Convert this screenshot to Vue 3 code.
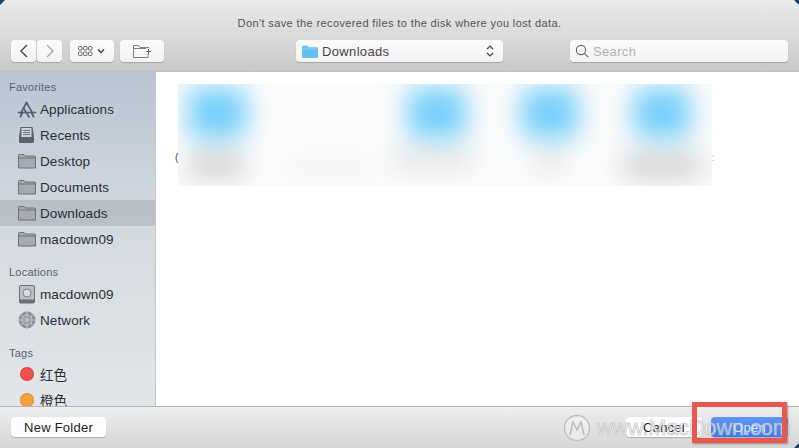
<script setup>
const sections = [
  { title: 'Favorites', cls: 'first', items: [
    { name: 'Applications', icon: 'apps' },
    { name: 'Recents', icon: 'recents' },
    { name: 'Desktop', icon: 'folder' },
    { name: 'Documents', icon: 'folder' },
    { name: 'Downloads', icon: 'folder', active: true },
    { name: 'macdown09', icon: 'folder' }
  ]},
  { title: 'Locations', cls: 'loc', items: [
    { name: 'macdown09', icon: 'disk' },
    { name: 'Network', icon: 'globe' }
  ]},
  { title: 'Tags', cls: 'tags', items: [
    { name: '红色', icon: 'tag', color: '#f4504c' },
    { name: '橙色', icon: 'tag', color: '#f7a03c' }
  ]}
]
const blobs = [
  { x: 188, y: 88, w: 58, h: 50, c: '#74cffa' },
  { x: 408, y: 88, w: 58, h: 50, c: '#74cffa' },
  { x: 522, y: 88, w: 56, h: 50, c: '#74cffa' },
  { x: 634, y: 88, w: 56, h: 50, c: '#74cffa' },
  { x: 188, y: 152, w: 56, h: 26, c: '#d2d2d2' },
  { x: 285, y: 160, w: 90, h: 14, c: '#f0f0f0' },
  { x: 392, y: 152, w: 82, h: 14, c: '#dadada' },
  { x: 532, y: 152, w: 34, h: 16, c: '#dedede' },
  { x: 622, y: 154, w: 80, h: 24, c: '#d0d0d0' }
]
const blobStyle = b => ({
  left: b.x - 178 + 'px',
  top: b.y - 84 + 'px',
  width: b.w + 'px',
  height: b.h + 'px',
  background: b.c
})
</script>

<template>
  <div class="dialog">
    <header class="toolbar">
      <p class="message">Don't save the recovered files to the disk where you lost data.</p>
      <div class="controls">
        <div class="nav">
          <button class="btn nav-btn">
            <svg width="10" height="14" viewBox="0 0 10 14"><path d="M8 1 2 7l6 6" fill="none" stroke="#444" stroke-width="1.4"/></svg>
          </button>
          <button class="btn nav-btn">
            <svg width="10" height="14" viewBox="0 0 10 14"><path d="m2 1 6 6-6 6" fill="none" stroke="#a8a8a8" stroke-width="1.4"/></svg>
          </button>
        </div>
        <button class="btn view-btn">
          <svg width="29" height="12" viewBox="0 0 29 12">
            <g fill="none" stroke="#666" stroke-width="1">
              <rect x=".5" y="1.500" width="3.500" height="3.500" rx=".8"/><rect x="5.500" y="1.500" width="3.500" height="3.500" rx=".8"/><rect x="10.500" y="1.500" width="3.500" height="3.500" rx=".8"/>
              <rect x=".5" y="7" width="3.500" height="3.500" rx=".8"/><rect x="5.500" y="7" width="3.500" height="3.500" rx=".8"/><rect x="10.500" y="7" width="3.500" height="3.500" rx=".8"/>
            </g>
            <path d="m20 4.500 3 3 3-3" fill="none" stroke="#444" stroke-width="1.500"/>
          </svg>
        </button>
        <button class="btn new-btn">
          <svg width="18" height="13" viewBox="0 0 18 13" fill="none" stroke="#808080" stroke-width="1">
            <path d="M.5 12.500V.5h5l1.500 2h9M.5 12.500H15V9M.5 3.500H13"/>
            <path d="M15.500 4v5M13 6.500h5" stroke="#666"/>
          </svg>
        </button>
        <button class="btn popup">
          <svg class="popup-folder" width="16" height="13" viewBox="0 0 16 13">
            <path d="M0 2a1.200 1.200 0 0 1 1.200-1.200h4l1.300 1.400h8.200A1.300 1.300 0 0 1 16 3.500v8.200a1.200 1.200 0 0 1-1.200 1.200H1.200A1.200 1.200 0 0 1 0 11.700z" fill="#64bdf3"/>
            <rect y="3.400" width="16" height="1" fill="#8fd2f9"/>
          </svg>
          <span class="popup-label">Downloads</span>
          <svg class="updown" width="8" height="14" viewBox="0 0 8 14" fill="none" stroke="#444" stroke-width="1.200"><path d="m1 5 3-3 3 3M1 9l3 3 3-3"/></svg>
        </button>
        <div class="btn search">
          <svg width="14" height="14" viewBox="0 0 14 14" fill="none" stroke="#666" stroke-width="1.100"><circle cx="6" cy="6" r="4.600"/><path d="m9.400 9.400 3.800 3.800"/></svg>
          <span>Search</span>
        </div>
      </div>
    </header>

    <div class="middle">
      <aside class="sidebar">
        <section v-for="s in sections" :key="s.title" class="section" :class="s.cls">
          <h4>{{ s.title }}</h4>
          <div v-for="it in s.items" :key="s.title + it.name" class="row" :class="{ active: it.active }">
            <span class="ico">
              <svg v-if="it.icon === 'apps'" width="20" height="17" viewBox="0 0 20 17" fill="none" stroke="#59616c" stroke-linecap="round">
                <path d="M9.500 1.500 4 12M9.500 1.500 15.500 12" stroke-width="1.700"/>
                <path d="M1.500 11.500h17M6.500 7l5.500 9" stroke-width="1.700"/>
                <path d="M3.500 15.500 5 12.500M16.500 15.500 15 12.500" stroke-width="2"/>
              </svg>
              <svg v-else-if="it.icon === 'recents'" width="17" height="18" viewBox="0 0 17 18">
                <path d="M2.500 1h12l1.500 9.500v5a1.500 1.500 0 0 1-1.500 1.500h-12A1.500 1.500 0 0 1 1 15.500v-5z" fill="#5b636e"/>
                <rect x="3.500" y="2" width="10" height="9" fill="#cfd3d9"/>
                <path d="M5 4.500h7M5 6.500h7M5 8.500h7" stroke="#6f7680"/>
              </svg>
              <svg v-else-if="it.icon === 'folder'" width="18" height="15" viewBox="0 0 18 15">
                <path d="M.5 14V1.500a1 1 0 0 1 1-1h4.500l1.200 1.500h9.300a1 1 0 0 1 1 1V14z" fill="#a7abb0" stroke="#6e7277"/>
                <path d="M.5 4h17" stroke="#6e7277"/>
              </svg>
              <svg v-else-if="it.icon === 'disk'" width="16" height="19" viewBox="0 0 16 19">
                <rect x=".5" y=".5" width="15" height="17.500" rx="1.500" fill="#bcc0c4" stroke="#6e7277"/>
                <circle cx="8" cy="8" r="4" fill="#d8dadd" stroke="#80858b"/>
                <rect x=".5" y="14.500" width="15" height="3.500" fill="#6c7077"/>
              </svg>
              <svg v-else-if="it.icon === 'globe'" width="18" height="18" viewBox="0 0 18 18" fill="none">
                <circle cx="9" cy="9" r="8.500" fill="#8b9096"/>
                <g stroke="#d0d3d6" stroke-width=".8"><circle cx="9" cy="9" r="5"/><path d="M1 9h16M9 1v16M3 4l12 10M15 4 3 14"/></g>
              </svg>
              <span v-else class="dot" :style="{ background: it.color }"></span>
            </span>
            <span class="name">{{ it.name }}</span>
          </div>
        </section>
      </aside>
      <main class="files">
        <div class="redacted">
          <div class="blurs">
            <span v-for="(b, i) in blobs" :key="i" class="blob" :style="blobStyle(b)"></span>
          </div>
        </div>
        <span class="stray left">(</span>
        <span class="stray right">:</span>
      </main>
    </div>

    <footer class="footer">
      <button class="btn foot-btn new-folder">New Folder</button>
      <button class="btn foot-btn cancel">Cancel</button>
      <button class="btn foot-btn open">Open</button>
    </footer>

    <i class="corner tl"></i><i class="corner tr"></i><i class="corner br"></i>

    <div class="mark">
      <svg width="28" height="28" viewBox="0 0 28 28" fill="none" stroke="#bdbdbd" stroke-width="1.300">
        <circle cx="14" cy="14" r="12.500" fill="#ffffff66"/>
        <path d="M7 21 10 8l4 8 4-8 3 13" stroke-width="1.600"/>
      </svg>
      <span>www.MacDown.com</span>
    </div>
    <div class="callout"></div>
  </div>
</template>

<style scoped>
.dialog {
  position: relative;
  width: 799px;
  height: 448px;
  display: grid;
  grid-template-rows: 72px 1fr 42px;
  overflow: hidden;
  background: #fff;
  font-family: "Liberation Sans", Arial, sans-serif;
  color: #2b2f35;
}
.toolbar {
  background: linear-gradient(#ebebeb, #dddddd 40%, #c9c9c9);
  border-bottom: 1px solid #c2c2c2;
  box-sizing: border-box;
}
.message {
  margin: 0;
  padding-top: 16px;
  line-height: 14px;
  height: 14px;
  text-align: center;
  font-size: 11px;
  letter-spacing: .39px;
  color: #555;
}
.controls {
  display: flex;
  align-items: center;
  margin-top: 10px;
  padding-left: 11px;
}
.btn {
  box-sizing: border-box;
  height: 22px;
  padding: 0;
  border: 0;
  border-radius: 4px;
  background: linear-gradient(#fbfbfb, #f3f3f3);
  box-shadow: 0 1px 1px rgba(0, 0, 0, .2);
  display: flex;
  align-items: center;
  justify-content: center;
  font: inherit;
}
.nav { display: flex; gap: 1px; }
.nav-btn { width: 25px; }
.view-btn { width: 44px; margin-left: 8px; }
.new-btn { width: 44px; margin-left: 6px; }
.popup {
  width: 207px;
  margin-left: 132px;
  justify-content: flex-start;
  padding: 0 9px 0 6px;
}
.popup-label {
  margin-left: 4px;
  font-size: 13px;
  letter-spacing: .35px;
  color: #444;
}
.updown { margin-left: auto; }
.search {
  width: 218px;
  margin-left: 67px;
  justify-content: flex-start;
  padding-left: 5px;
  gap: 4px;
  font-size: 13px;
  letter-spacing: .35px;
  color: #b2b2b2;
}
.middle {
  display: grid;
  grid-template-columns: 156px 1fr;
  min-height: 0;
}
.sidebar {
  overflow: hidden;
  background: linear-gradient(#b9c5d3, #d3d9df 45%, #e3e6e9);
  border-right: 1px solid #c4c7ca;
  box-sizing: border-box;
}
.section.first { margin-top: 8px; }
.section.loc { margin-top: 13px; }
.section.tags { margin-top: 13px; }
h4 {
  margin: 0 0 2px;
  padding-left: 9px;
  height: 14px;
  line-height: 14px;
  font-size: 11px;
  font-weight: 400;
  letter-spacing: .25px;
  color: #59616c;
}
.tags h4 { margin-bottom: 1px; }
.row {
  display: flex;
  align-items: center;
  height: 26px;
}
.row.active { background: rgba(110, 120, 130, .25); }
.ico {
  width: 40px;
  display: flex;
  justify-content: center;
  padding-left: 13px;
  box-sizing: border-box;
}
.dot {
  width: 12px;
  height: 12px;
  border-radius: 50%;
  border: 1px solid rgba(0, 0, 0, .12);
}
.name {
  font-family: "Liberation Sans", "Noto Sans CJK SC", sans-serif;
  font-size: 13.500px;
  letter-spacing: .1px;
}
.files {
  position: relative;
  background: #fff;
  overflow: hidden;
}
.redacted {
  position: absolute;
  left: 22px;
  top: 12px;
  width: 534px;
  height: 102px;
  background: #fbfbfb;
  overflow: hidden;
}
.blurs { position: absolute; inset: 0; filter: blur(13px); }
.blob { position: absolute; border-radius: 8px; }
.stray {
  position: absolute;
  top: 80px;
  font-size: 10px;
  color: #444;
}
.stray.left { left: 19px; }
.stray.right { left: 556px; color: #aaa; }
.footer {
  position: relative;
  background: linear-gradient(#eeeeee, #d6d6d6);
  border-top: 1px solid #b5b5b5;
  box-sizing: border-box;
}
.foot-btn {
  position: absolute;
  top: 10px;
  height: 20px;
  font-size: 13px;
  letter-spacing: .25px;
  color: #222;
  background: #fdfdfd;
}
.new-folder { left: 11px; width: 95px; }
.cancel { left: 626px; width: 76px; }
.open {
  left: 711px;
  width: 77px;
  color: #dfe8fb;
  background: linear-gradient(#5e96f6, #3d7cf0);
}
.corner { position: absolute; width: 5px; height: 5px; background: #20406a; }
.corner.tl { left: 0; top: 0; clip-path: polygon(0 0, 100% 0, 0 100%); }
.corner.tr { right: 0; top: 0; clip-path: polygon(0 0, 100% 0, 100% 100%); }
.corner.br { right: 0; bottom: 0; clip-path: polygon(100% 0, 100% 100%, 0 100%); }
.mark {
  position: absolute;
  left: 563px;
  top: 414px;
  display: flex;
  align-items: center;
  gap: 6px;
  pointer-events: none;
}
.mark span {
  font-family: "Liberation Sans", sans-serif;
  font-size: 21.500px;
  color: rgba(255, 255, 255, .6);
  -webkit-text-stroke: .6px #b8b8b8;
  line-height: 28px;
}
.callout {
  position: absolute;
  left: 692px;
  top: 402px;
  width: 95px;
  height: 41px;
  box-sizing: border-box;
  border: 5px solid #e8584f;
  box-shadow: 1px 1px 2px rgba(0, 0, 0, .35);
}
</style>
